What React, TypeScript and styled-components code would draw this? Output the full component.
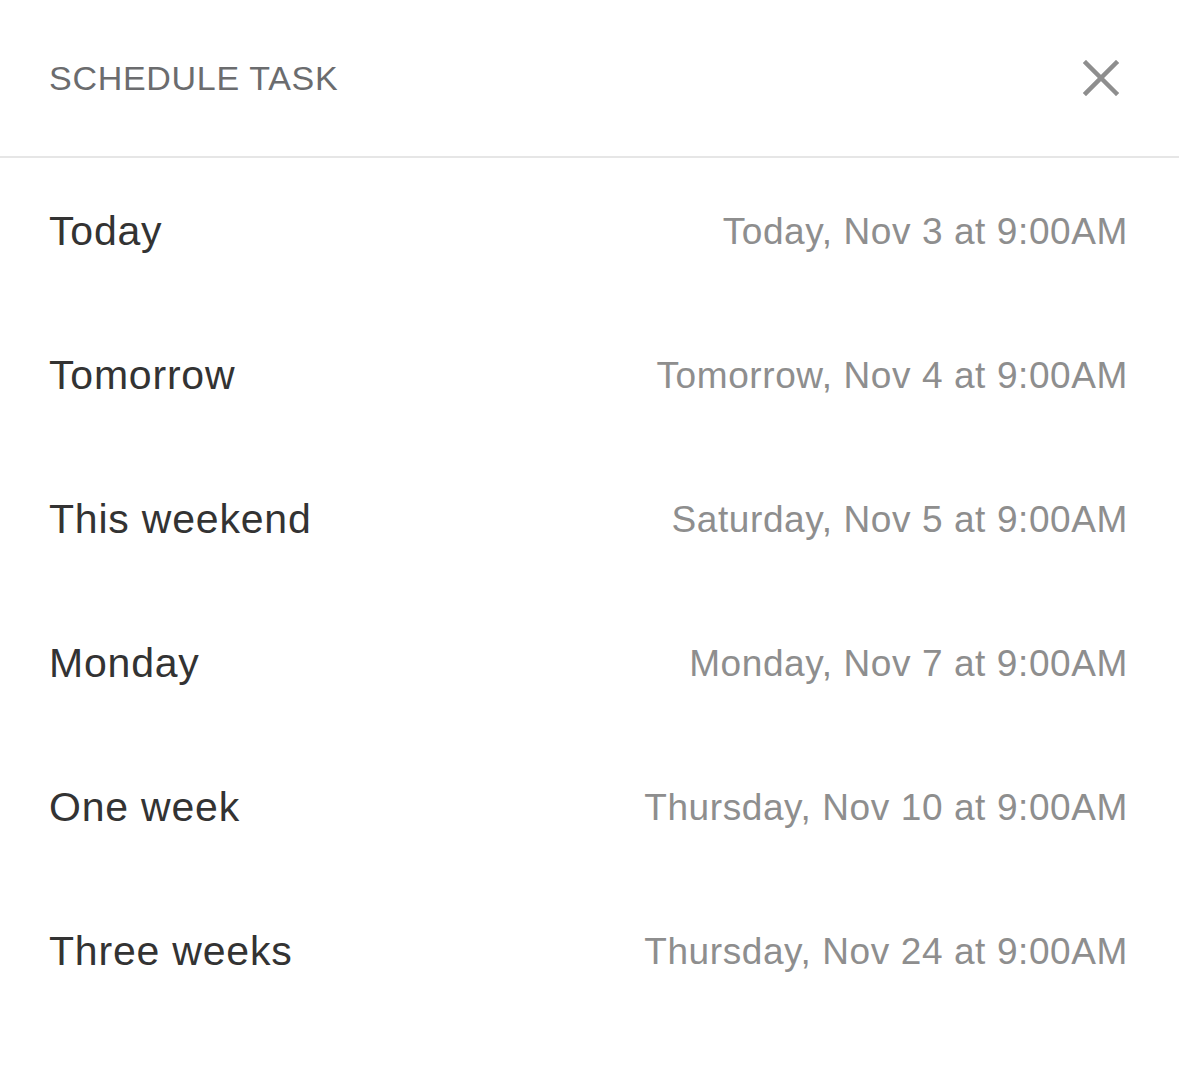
import React from "react";
import styled, { createGlobalStyle } from "styled-components";

const Global = createGlobalStyle`
  html, body { margin: 0; padding: 0; background: #ffffff; }
  body { font-family: "Liberation Sans", Arial, sans-serif; -webkit-font-smoothing: antialiased; }
`;

const Sheet = styled.div`
  width: 1179px;
  height: 1070px;
  background: #ffffff;
  display: flex;
  flex-direction: column;
`;

const Header = styled.header`
  height: 156px;
  display: flex;
  align-items: center;
  justify-content: space-between;
  padding: 0 60px 0 49px;
  border-bottom: 2px solid #e6e6e6;
`;

const Title = styled.h1`
  margin: 0;
  font-size: 34px;
  font-weight: 400;
  letter-spacing: 0.7px;
  line-height: 1;
  color: #6b6c6e;
`;

const CloseButton = styled.button`
  border: 0;
  background: none;
  padding: 0;
  width: 36px;
  height: 36px;
  display: flex;
  align-items: center;
  justify-content: center;
  cursor: pointer;
`;

const List = styled.ul`
  list-style: none;
  margin: 0;
  padding: 0;
  display: flex;
  flex-direction: column;
`;

const Row = styled.li`
  height: 144px;
  box-sizing: border-box;
  display: flex;
  align-items: center;
  justify-content: space-between;
  padding: 2px 51px 0 49px;
`;

const Label = styled.span`
  font-size: 41px;
  letter-spacing: 0.8px;
  line-height: 1;
  color: #333333;
`;

const When = styled.span`
  font-size: 37px;
  letter-spacing: 0.6px;
  line-height: 1;
  color: #8e8e8e;
`;

const options = [
  { label: "Today", when: "Today, Nov 3 at 9:00AM" },
  { label: "Tomorrow", when: "Tomorrow, Nov 4 at 9:00AM" },
  { label: "This weekend", when: "Saturday, Nov 5 at 9:00AM" },
  { label: "Monday", when: "Monday, Nov 7 at 9:00AM" },
  { label: "One week", when: "Thursday, Nov 10 at 9:00AM" },
  { label: "Three weeks", when: "Thursday, Nov 24 at 9:00AM" },
];

export default function App() {
  return (
    <>
      <Global />
      <Sheet>
        <Header>
          <Title>SCHEDULE TASK</Title>
          <CloseButton aria-label="Close">
            <svg width="36" height="36" viewBox="0 0 36 36">
              <path d="M3 3 L33 33 M33 3 L3 33" stroke="#8e8e8e" strokeWidth="4.5" strokeLinecap="square" fill="none" />
            </svg>
          </CloseButton>
        </Header>
        <List>
          {options.map((o) => (
            <Row key={o.label}>
              <Label>{o.label}</Label>
              <When>{o.when}</When>
            </Row>
          ))}
        </List>
      </Sheet>
    </>
  );
}
